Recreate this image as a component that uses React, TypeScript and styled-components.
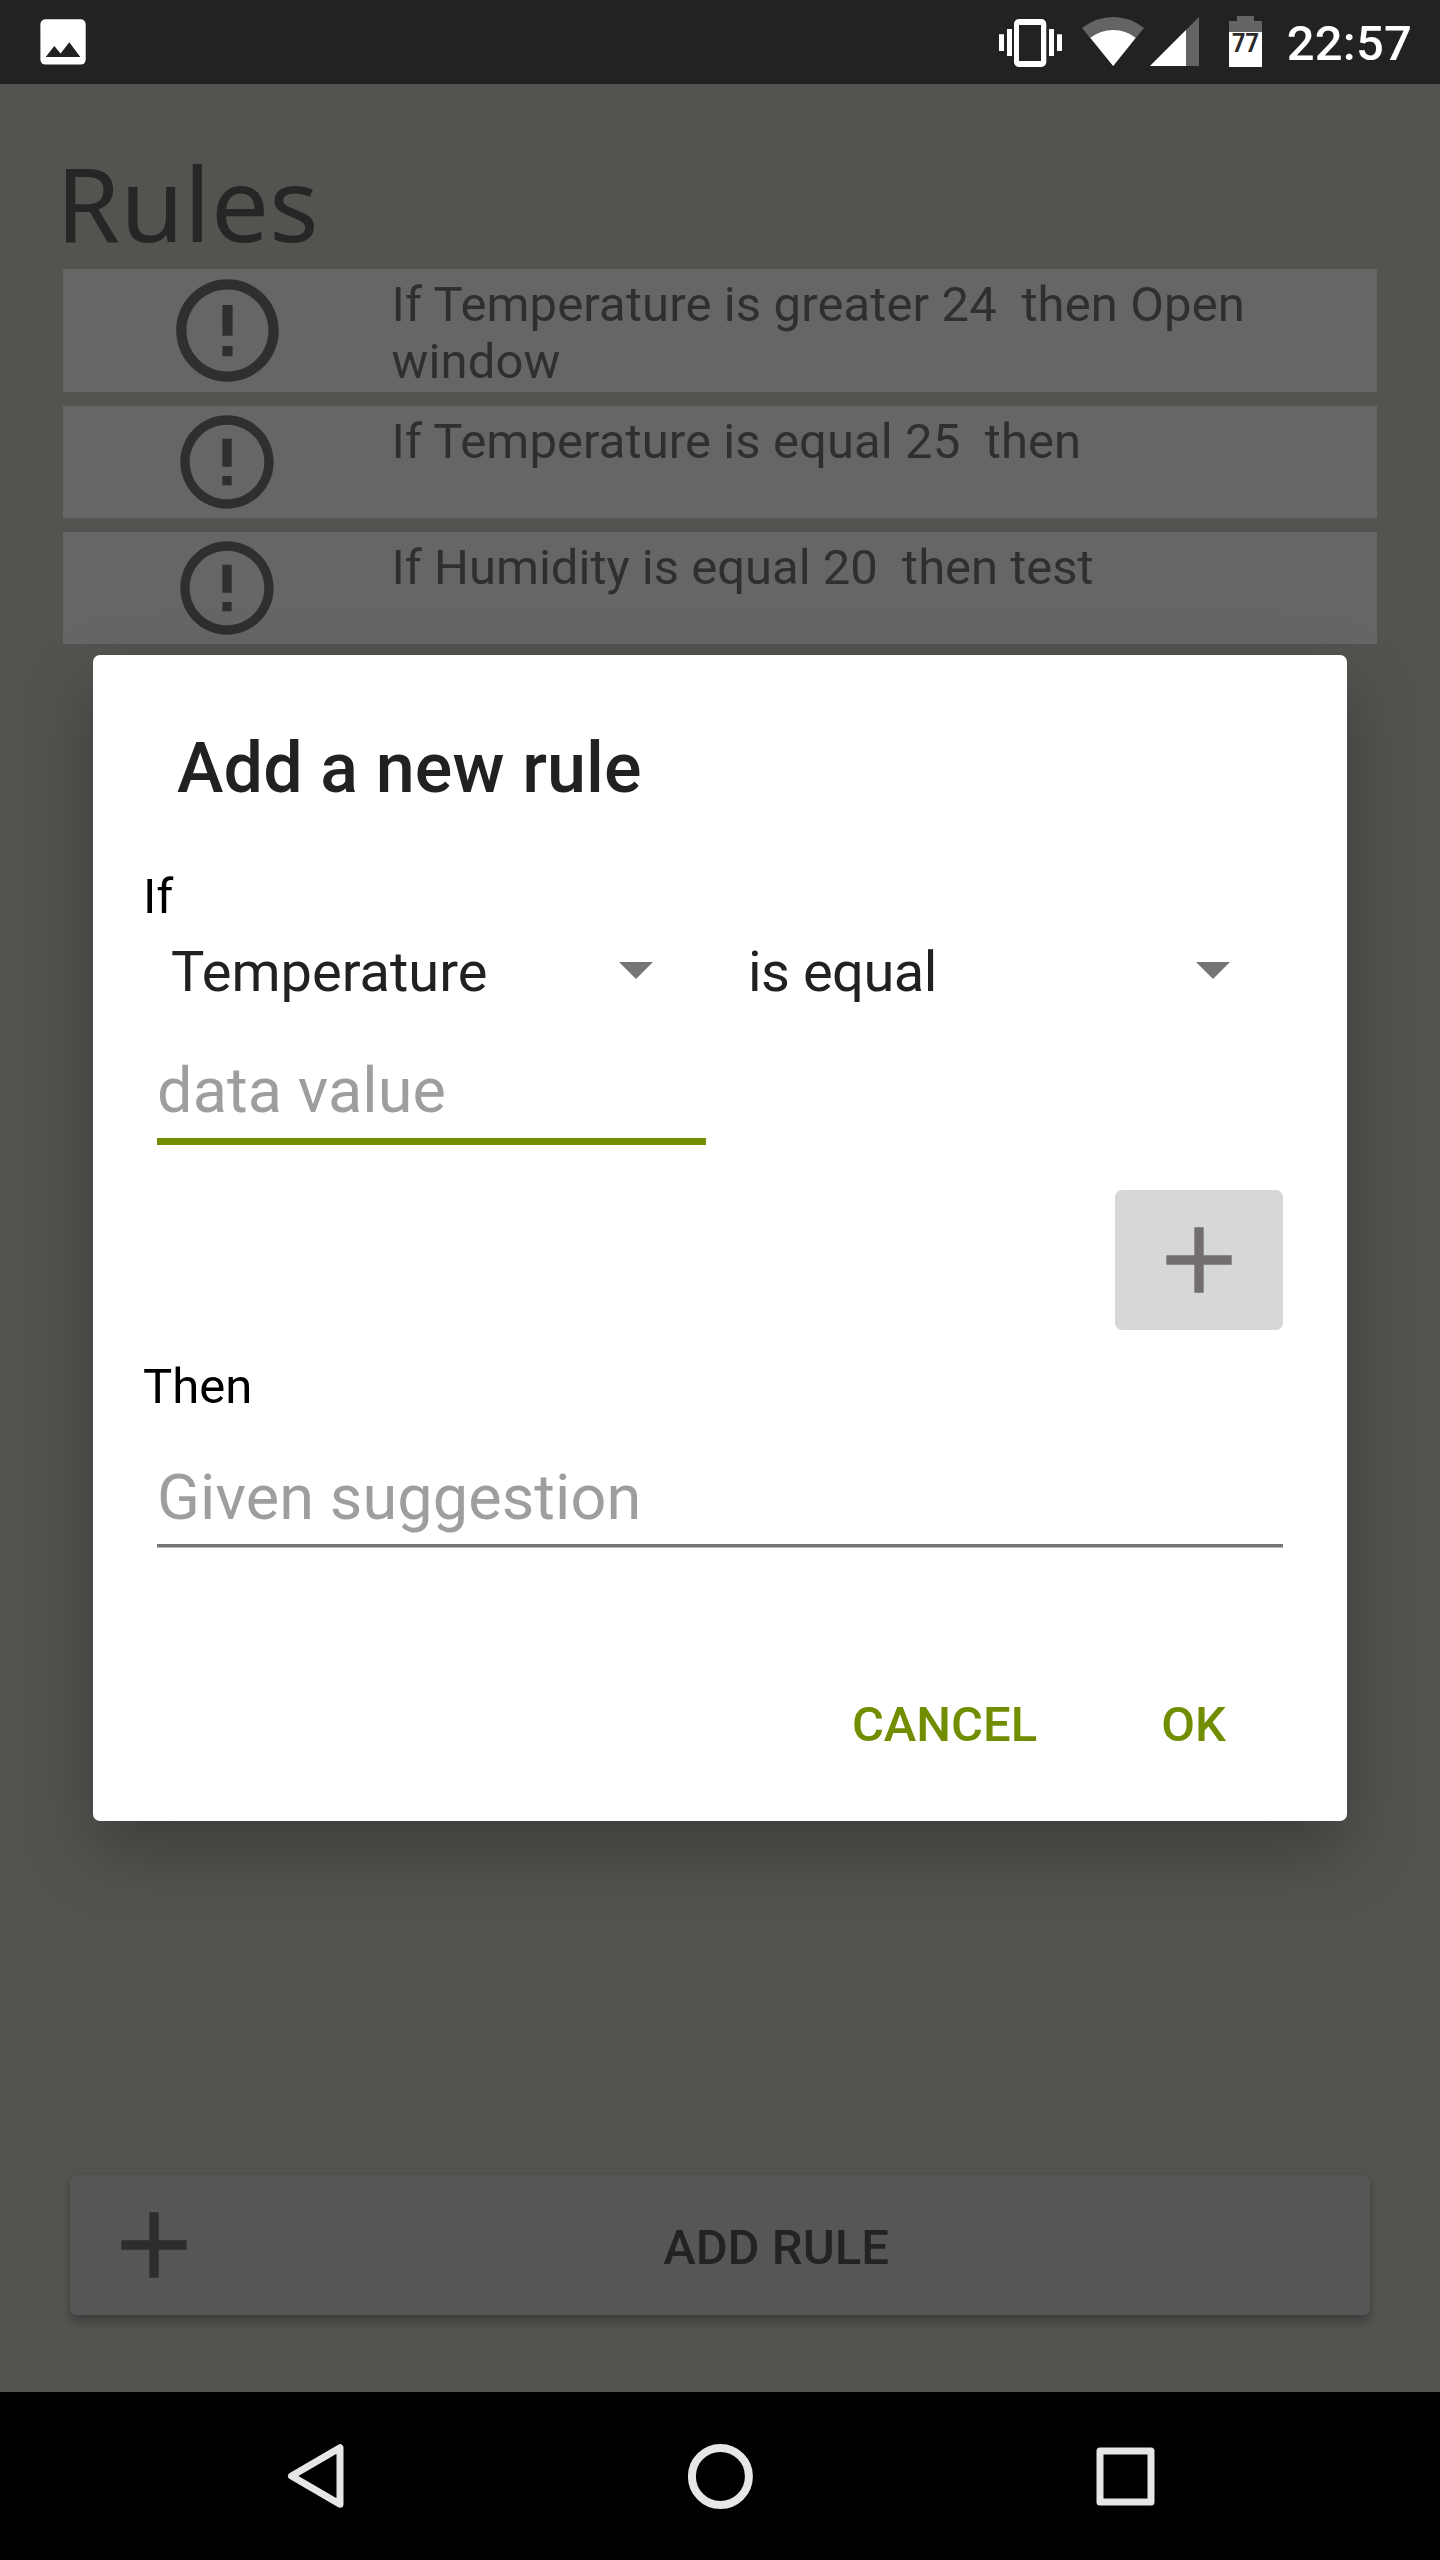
import React from "react";
import styled, { createGlobalStyle } from "styled-components";

const GlobalStyle = createGlobalStyle`
  html, body { margin: 0; padding: 0; background: #000; }
  *, *::before, *::after { box-sizing: border-box; }
  svg { display: block; flex: none; }
`;

const Screen = styled.div`
  position: relative;
  display: flex;
  flex-direction: column;
  width: 1440px;
  height: 2560px;
  overflow: hidden;
  font-family: Roboto, "Liberation Sans", sans-serif;
`;

const StatusBar = styled.header`
  display: flex;
  align-items: flex-start;
  justify-content: space-between;
  height: 84px;
  flex: none;
  padding: 0 28px 0 40px;
  background: #232122;
`;

const StatusGroup = styled.div`
  display: flex;
  align-items: flex-start;
`;

const Clock = styled.time`
  margin: 15px 0 0 24px;
  font-size: 49px;
  font-weight: 500;
  line-height: 57px;
  letter-spacing: 0.2px;
  color: #fff;
`;

const BatteryLevel = styled.text`
  font-family: Roboto, sans-serif;
  font-size: 26px;
  font-weight: 700;
  fill: #2b292a;
`;

const Page = styled.main`
  display: flex;
  flex-direction: column;
  flex: 1;
  padding: 58px 63px 77px;
  background: #555350;
`;

const Heading = styled.h1`
  margin: 0 0 7px -7px;
  font-family: "Noto Sans", sans-serif;
  font-size: 103px;
  font-weight: 400;
  line-height: 120px;
  letter-spacing: 0.2px;
  color: #262626;
`;

const RuleList = styled.ul`
  display: flex;
  flex-direction: column;
  gap: 14px;
  margin: 0;
  padding: 0;
  list-style: none;
`;

const RuleRow = styled.li<{ $height: number }>`
  display: flex;
  height: ${(p) => p.$height}px;
  background: #666;
`;

const RuleIcon = styled.div`
  display: flex;
  flex: 1;
  justify-content: center;
`;

const RuleText = styled.p<{ $tracking: number }>`
  flex: 3;
  margin: 0;
  padding-top: 7px;
  font-size: 49px;
  line-height: 57px;
  letter-spacing: ${(p) => p.$tracking}px;
  white-space: pre-wrap;
  color: #2f2f2f;
`;

const AddRuleButton = styled.button`
  display: flex;
  align-items: center;
  height: 140px;
  margin: auto 7px 0;
  padding: 0 28px;
  border: 0;
  border-radius: 7px;
  background: #565656;
  box-shadow: 0 8px 8px rgba(0, 0, 0, 0.2), 0 0 5px rgba(0, 0, 0, 0.1);
  font: 500 49px/57px Roboto, sans-serif;
  color: #242223;
`;

const AddRuleLabel = styled.span`
  flex: 1;
  padding-top: 4px;
  text-align: center;
`;

const NavBar = styled.nav`
  display: flex;
  align-items: center;
  justify-content: center;
  gap: 325px;
  height: 168px;
  flex: none;
  background: #000;
`;

const Overlay = styled.div`
  position: absolute;
  inset: 84px 0 168px;
  display: flex;
  align-items: center;
  justify-content: center;
`;

const Dialog = styled.section`
  display: flex;
  flex-direction: column;
  width: 1254px;
  height: 1166px;
  padding: 72px 64px 0 50px;
  border-radius: 7px;
  background: #fff;
  box-shadow: 0 30px 70px rgba(0, 0, 0, 0.28);
`;

const DialogTitle = styled.h2`
  margin: 0 0 59px 34px;
  font-size: 70px;
  font-weight: 500;
  line-height: 82px;
  letter-spacing: 0.15px;
  color: #212121;
`;

const SectionLabel = styled.span`
  font-size: 49px;
  line-height: 57px;
  color: #000;
`;

const SpinnerRow = styled.div`
  display: flex;
  gap: 95px;
  margin: 14px 0 49px 28px;
`;

const Spinner = styled.div<{ $tracking?: number }>`
  display: flex;
  align-items: center;
  justify-content: space-between;
  width: 482px;
  font-size: 56px;
  line-height: 66px;
  letter-spacing: ${(p) => p.$tracking ?? 0}px;
  color: #212121;
`;

const Arrow = styled.span`
  margin-top: -3px;
  border: 17.5px solid transparent;
  border-top-color: #757575;
  border-bottom: 0;
`;

const Field = styled.div<{ $focused?: boolean }>`
  width: ${(p) => (p.$focused ? "549px" : "auto")};
  margin-left: 14px;
  padding-bottom: ${(p) => (p.$focused ? 10 : 9)}px;
  border-bottom: ${(p) => (p.$focused ? "7px solid #718d00" : "3px solid #757575")};
  box-shadow: ${(p) => (p.$focused ? "none" : "0 1px 0 #b8b8b8")};
  font-size: 63px;
  line-height: 74px;
  letter-spacing: 0.1px;
  color: #9e9e9e;
`;

const PlusButton = styled.button`
  display: flex;
  align-items: center;
  justify-content: center;
  align-self: flex-end;
  width: 168px;
  height: 140px;
  margin: 45px 0 28px;
  padding: 0;
  border: 0;
  border-radius: 7px;
  background: #d6d8d7;
`;

const ThenBlock = styled.div`
  display: flex;
  flex-direction: column;
  gap: 46px;
`;

const Actions = styled.footer`
  display: flex;
  justify-content: flex-end;
  gap: 124px;
  margin-top: 149px;
  padding-right: 57px;
`;

const TextButton = styled.button`
  padding: 0;
  border: 0;
  background: none;
  font: 500 49px/57px Roboto, sans-serif;
  color: #718d00;
`;

const ErrorIcon = ({ size }: { size: number }) => (
  <svg width={size} height={size} viewBox="0 0 24 24" fill="#302e2f">
    <path d="M11 15h2v2h-2zm0-8h2v6h-2zm.99-5C6.47 2 2 6.48 2 12s4.47 10 9.99 10C17.52 22 22 17.52 22 12S17.52 2 11.99 2zM12 20c-4.42 0-8-3.58-8-8s3.58-8 8-8 8 3.58 8 8-3.58 8-8 8z" />
  </svg>
);

const PlusIcon = ({ color }: { color: string }) => (
  <svg width="112" height="112" viewBox="0 0 24 24" fill={color}>
    <path d="M19 13h-6v6h-2v-6H5v-2h6V5h2v6h6z" />
  </svg>
);

const PictureIcon = () => (
  <svg width="46" height="84" viewBox="0 0 46 84">
    <rect x="0.4" y="19.3" width="45.3" height="45.3" rx="5" fill="#fff" />
    <path d="M5.7 57l8.6-11 6.3 7.4L29.3 42.3 40.3 57z" fill="#232122" />
  </svg>
);

/* Vibrate, wifi, mobile signal and battery share one strip. */
const StatusIcons = () => (
  <svg width="266" height="84" viewBox="0 0 266 84">
    <g fill="#fff">
      <path d="M2 34.3h5V51H2zM10 29h5v27h-5zM52 29h5v27h-5zM60 34.3h5V51h-5z" />
      <path
        fillRule="evenodd"
        d="M22 19h22.300a5 5 0 0 1 5 5v38a5 5 0 0 1-5 5H22a5 5 0 0 1-5-5V24a5 5 0 0 1 5-5zM22 25v36h22V25z"
      />
    </g>
    <path d="M85 28Q99 17 116.200 17T147 28L116.200 66z" fill="#656364" />
    <path d="M93.300 37.700Q103.500 30 116.200 30T138.700 37.700L116.200 66z" fill="#fff" />
    <path d="M153 66L202 17V66z" fill="#656364" />
    <path d="M153 66L189 30V66z" fill="#fff" />
    <path d="M240 16h17v5h8v11.500h-33V21h8z" fill="#656364" />
    <path d="M232 32h33v35h-33z" fill="#fff" />
    <BatteryLevel transform="translate(235 51.600) scale(0.9 1)">77</BatteryLevel>
  </svg>
);

const BackIcon = () => (
  <svg width="80" height="80" viewBox="0 0 80 80" fill="none" stroke="#e6e6e6" strokeWidth="7" strokeLinejoin="round">
    <path d="M65 11.700V68.300L16.500 40z" />
  </svg>
);

const HomeIcon = () => (
  <svg width="80" height="80" viewBox="0 0 80 80" fill="none" stroke="#e6e6e6" strokeWidth="8">
    <circle cx="40.400" cy="40.400" r="28.500" />
  </svg>
);

const RecentsIcon = () => (
  <svg width="80" height="80" viewBox="0 0 80 80" fill="none" stroke="#e6e6e6" strokeWidth="7" strokeLinejoin="round">
    <path d="M15 15h51v51H15z" />
  </svg>
);

const rules = [
  { text: "If Temperature is greater 24  then Open window", height: 123, tracking: 0.12 },
  { text: "If Temperature is equal 25  then", height: 112, tracking: 0.09 },
  { text: "If Humidity is equal 20  then test", height: 112, tracking: 0 },
];

export default function App() {
  return (
    <Screen>
      <GlobalStyle />
      <StatusBar>
        <PictureIcon />
        <StatusGroup>
          <StatusIcons />
          <Clock>22:57</Clock>
        </StatusGroup>
      </StatusBar>

      <Page>
        <Heading>Rules</Heading>
        <RuleList>
          {rules.map((rule) => (
            <RuleRow key={rule.text} $height={rule.height}>
              <RuleIcon>
                <ErrorIcon size={rule.height} />
              </RuleIcon>
              <RuleText $tracking={rule.tracking}>{rule.text}</RuleText>
            </RuleRow>
          ))}
        </RuleList>
        <AddRuleButton>
          <PlusIcon color="#2e2c2d" />
          <AddRuleLabel>ADD RULE</AddRuleLabel>
        </AddRuleButton>
      </Page>

      <NavBar>
        <BackIcon />
        <HomeIcon />
        <RecentsIcon />
      </NavBar>

      <Overlay>
        <Dialog role="dialog">
          <DialogTitle>Add a new rule</DialogTitle>
          <SectionLabel>If</SectionLabel>
          <SpinnerRow>
            <Spinner>
              Temperature
              <Arrow />
            </Spinner>
            <Spinner $tracking={-0.5}>
              is equal
              <Arrow />
            </Spinner>
          </SpinnerRow>
          <Field $focused>data value</Field>
          <PlusButton aria-label="Add condition">
            <PlusIcon color="#726d6e" />
          </PlusButton>
          <ThenBlock>
            <SectionLabel>Then</SectionLabel>
            <Field>Given suggestion</Field>
          </ThenBlock>
          <Actions>
            <TextButton>CANCEL</TextButton>
            <TextButton>OK</TextButton>
          </Actions>
        </Dialog>
      </Overlay>
    </Screen>
  );
}
